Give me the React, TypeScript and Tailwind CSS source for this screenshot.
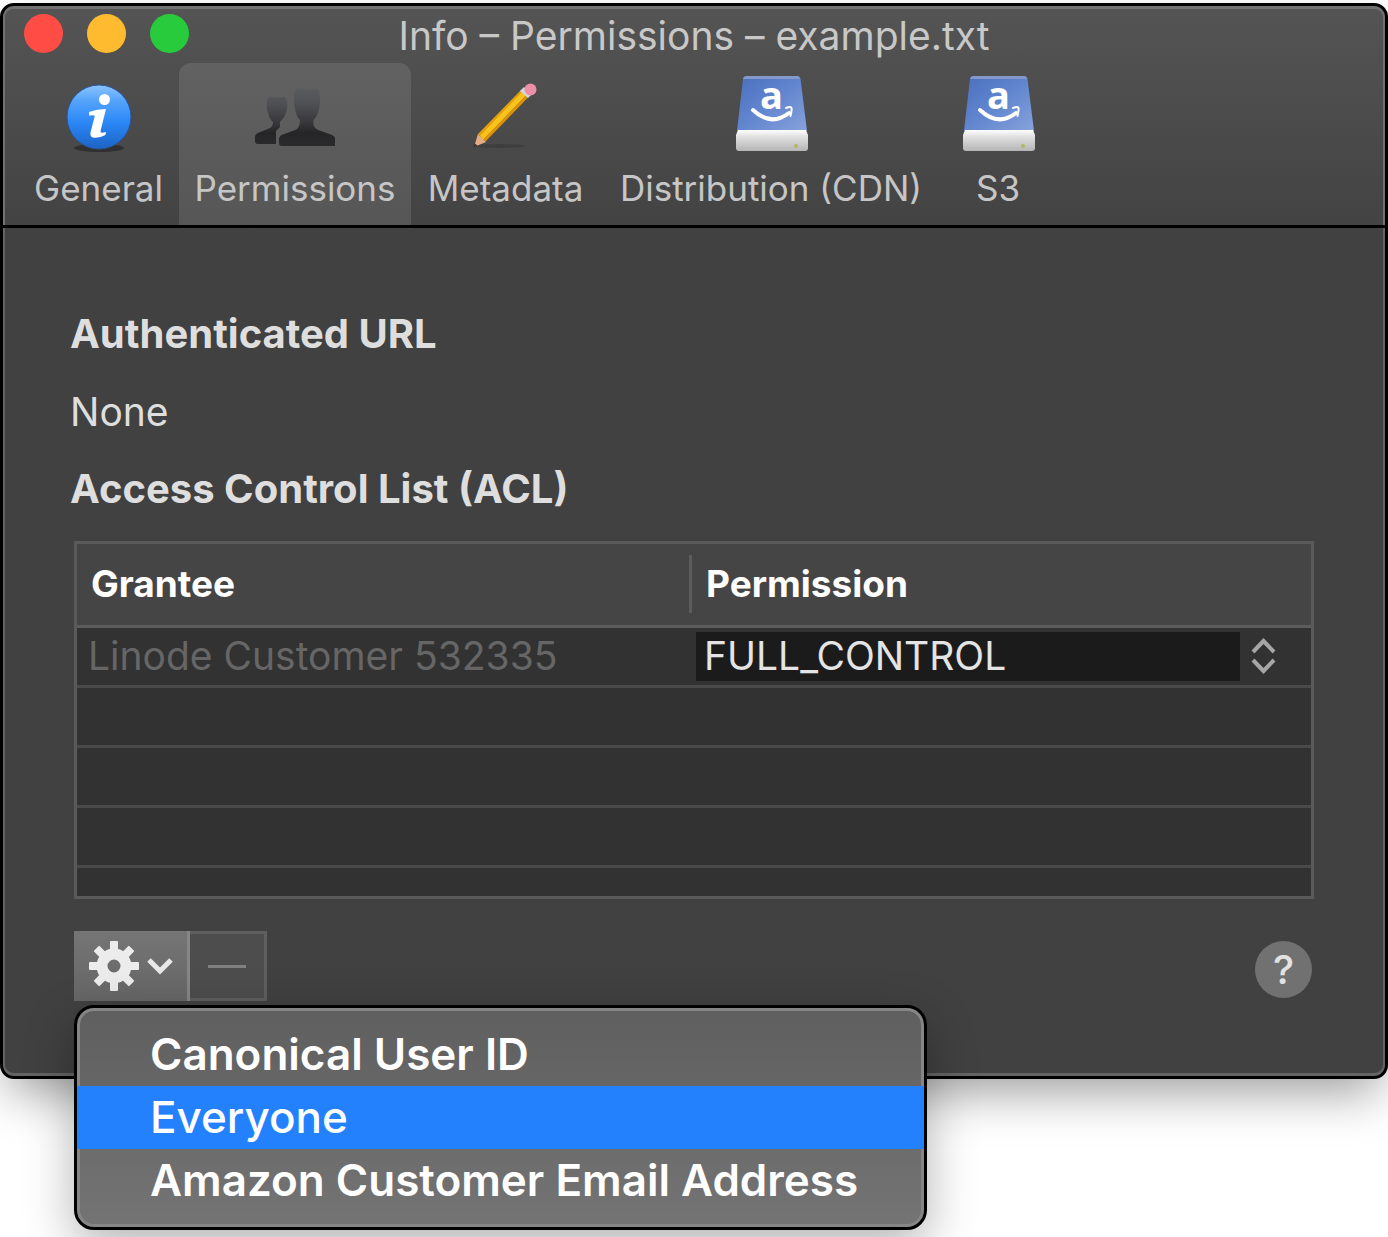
import React from "react";

type TabProps = {
  label: string;
  width: string;
  selected?: boolean;
  children: React.ReactNode;
};

function Tab({ label, width, selected, children }: TabProps) {
  return (
    <button
      role="tab"
      aria-selected={!!selected}
      className={`flex shrink-0 flex-col items-center gap-[14px] pt-[11px] pb-[17px] ${width} ${
        selected ? "rounded-t-xl bg-white/10" : ""
      }`}
    >
      {children}
      <span className="text-[35px] leading-10 whitespace-nowrap text-[#c6c6c6]">{label}</span>
    </button>
  );
}

function InfoIcon() {
  return (
    <svg viewBox="0 0 80 80" className="h-20 w-20" aria-hidden="true">
      <defs>
        <linearGradient id="info" x1="0" y1="0" x2="0" y2="1">
          <stop offset="0" stopColor="#8cc4ff" />
          <stop offset="0.25" stopColor="#54a3fb" />
          <stop offset="0.6" stopColor="#2a86f5" />
          <stop offset="1" stopColor="#1c63c4" />
        </linearGradient>
      </defs>
      <ellipse cx="40" cy="74" rx="25" ry="4" fill="#262626" opacity="0.7" />
      <circle cx="40" cy="43" r="32" fill="url(#info)" stroke="#28549a" strokeWidth="1" />
      <circle cx="45.500" cy="25.500" r="5.500" fill="#fff" />
      <path d="M30 38q8-3 17-3l-5.500 22q-.5 3 5.500 1l-.6 3q-5 2.800-10 2.800-6.500 0-4.700-6.300l4-15q.5-2-5.700-1z" fill="#fff" />
    </svg>
  );
}

function PeopleIcon() {
  return (
    <svg viewBox="0 0 80 80" className="h-20 w-20" aria-hidden="true">
      <defs>
        <linearGradient id="people" x1="0" y1="14" x2="0" y2="70" gradientUnits="userSpaceOnUse">
          <stop offset="0" stopColor="#5b5c60" />
          <stop offset="0.3" stopColor="#4e4f53" />
          <stop offset="0.6" stopColor="#39393c" />
          <stop offset="0.8" stopColor="#252426" />
          <stop offset="1" stopColor="#2a292b" />
        </linearGradient>
      </defs>
      <path
        d="M12 28q0-4 3-5.500 7 2.500 14 0 3 2 3 6 1 2 0 6-1 8-7 13.500v5l-4 4v13H3q-3 0-3-3v-4q0-3 4-4.500l11-4.500q3-2 3-6-4-3-5-10-2-2-1-10z"
        fill="url(#people)"
      />
      <path
        d="M40 17q2-3 6-3 8 3 15 0 4 2 3.500 8 1 3 .5 7-1 12-6.500 17v5q1 4 7.500 6l11 4q4 2 4 6v3q0 2-3 2H27q-3 0-3-3v-4q0-3 4-4.500l12-4.500q5-2 5-10-4-3-5.500-14-1-6-.5-9 0-3 1-6z"
        fill="url(#people)"
      />
    </svg>
  );
}

function PencilIcon() {
  return (
    <svg viewBox="0 0 80 80" className="h-20 w-20" aria-hidden="true">
      <ellipse cx="34" cy="72" rx="26" ry="2" fill="#3c3c3c" opacity="0.8" />
      <path d="M12 60 20 68 8 73z" fill="#e3ac85" />
      <path d="M8.500 69.500 11.500 71.500 7.500 73.500z" fill="#3a2c24" />
      <path d="M12 60 55 16l3 2.500L15 63z" fill="#e0a010" />
      <path d="M14 62 57 17l4 3.500L17.500 66z" fill="#fac31c" />
      <path d="m17 65.500 44-45 2 2-43.500 45z" fill="#d9930c" />
      <path d="m54 17 4-4 8 7-4 4z" fill="#d5d5dc" />
      <circle cx="64.500" cy="15.500" r="6" fill="#ee8fa9" />
    </svg>
  );
}

function DriveIcon({ id }: { id: string }) {
  return (
    <svg viewBox="-2 0 80 80" className="h-20 w-20 overflow-visible" aria-hidden="true">
      <defs>
        <linearGradient id={`${id}-top`} x1="0" y1="0" x2="1" y2="1">
          <stop offset="0" stopColor="#4a6fbd" />
          <stop offset="0.5" stopColor="#6286cf" />
          <stop offset="1" stopColor="#88a2dc" />
        </linearGradient>
        <linearGradient id={`${id}-front`} x1="0" y1="0" x2="0" y2="1">
          <stop offset="0" stopColor="#ffffff" />
          <stop offset="0.35" stopColor="#dedede" />
          <stop offset="1" stopColor="#b5b5b5" />
        </linearGradient>
      </defs>
      <path d="M14 2h50q3 0 3.500 3L74 57H4L10 5q.5-3 4-3z" fill={`url(#${id}-top)`} />
      <path d="M14 2h50q2.500 0 3 3H10q.5-3 4-3z" fill="#8398cc" />
      <path d="M5 56h68l2 5v13q0 3-3 3H6q-3 0-3-3V61z" fill={`url(#${id}-front)`} />
      <circle cx="63" cy="72" r="2" fill="#b3b56a" />
      <text x="38.500" y="35" textAnchor="middle" fontSize="38" fontWeight="700" fill="#fff" className="font-['Open_Sans',sans-serif]">
        a
      </text>
      <path d="M20 36q18 17 36 3" fill="none" stroke="#fff" strokeWidth="4" strokeLinecap="round" />
      <path d="M53 34q5-2 5.500 0t-1 8" fill="none" stroke="#fff" strokeWidth="2" strokeLinecap="round" />
    </svg>
  );
}

function GearIcon() {
  const angles = [0, 45, 90, 135, 180, 225, 270, 315];
  return (
    <svg viewBox="0 0 50 50" className="h-[50px] w-[50px]" aria-hidden="true">
      <g fill="#ececec">
        {angles.map((a) => (
          <path key={a} d="M21 12V1q0-1 1-1h6q1 0 1 1v11z" transform={`rotate(${a} 25 25)`} />
        ))}
      </g>
      <circle cx="25" cy="25" r="12" fill="none" stroke="#ececec" strokeWidth="11" />
    </svg>
  );
}

const lights = [
  { name: "Close", color: "bg-[#ff4d45]" },
  { name: "Minimize", color: "bg-[#ffbb2f]" },
  { name: "Zoom", color: "bg-[#27cb3b]" },
];

export default function App() {
  return (
    <div className="min-h-screen bg-white pt-[3px] font-['Inter',sans-serif]">
      <main className="rounded-[14px] border-[3px] border-black bg-black shadow-[0_20px_50px_-8px_rgba(0,0,0,0.4)]">
        <header className="rounded-t-[11px] border-x-2 border-t-[3px] border-[#717171] bg-linear-to-b from-[#545454] to-[#434343]">
          <div className="grid h-[54px] grid-cols-[1fr_auto_1fr] items-center">
            <div className="flex gap-6 self-start pt-[5px] pl-[19px]">
              {lights.map((l) => (
                <button key={l.name} aria-label={l.name} className={`h-[39px] w-[39px] rounded-full ${l.color}`} />
              ))}
            </div>
            <h1 className="text-[39px] leading-12 whitespace-nowrap text-[#c8c8c8]">
              Info – Permissions – example.txt
            </h1>
          </div>
          <nav role="tablist" aria-label="Info sections" className="flex pl-[13px]">
            <Tab label="General" width="w-[161px]">
              <InfoIcon />
            </Tab>
            <Tab label="Permissions" width="w-[232px]" selected>
              <PeopleIcon />
            </Tab>
            <Tab label="Metadata" width="w-[189px]">
              <PencilIcon />
            </Tab>
            <Tab label="Distribution (CDN)" width="w-[342px]">
              <DriveIcon id="cdn" />
            </Tab>
            <Tab label="S3" width="w-[112px]">
              <DriveIcon id="s3" />
            </Tab>
          </nav>
        </header>

        <section className="mt-[3px] rounded-b-[11px] border-x-2 border-b-[3px] border-[#646464] bg-[#414141] px-[65px] pt-[82px] pb-[72px] text-[39px] leading-12 text-[#dedede]">
          <h2 className="text-[40px] leading-12 font-bold">Authenticated URL</h2>
          <p className="mt-[30px]">None</p>
          <h2 className="mt-[29px] text-[40px] leading-12 font-bold">Access Control List (ACL)</h2>

          <div className="mx-1 mt-[28px] border-[3px] border-[#5a5a5a] bg-[#323232]">
            <table className="w-full table-fixed border-collapse">
              <thead>
                <tr className="h-[82px] border-b-[3px] border-[#5c5c5c] bg-[#454545] text-left text-[37px] text-white">
                  <th className="w-1/2 p-0 font-bold">
                    <div className="mr-0.5 flex h-[58px] items-center border-r-[3px] border-[#5c5c5c] pl-[14px]">Grantee</div>
                  </th>
                  <th className="p-0 pl-3 font-bold">Permission</th>
                </tr>
              </thead>
              <tbody>
                <tr className="h-[60px] border-b-[3px] border-[#4a4a4a]">
                  <td className="p-0 pl-[11px] text-[#666]">Linode Customer 532335</td>
                  <td className="p-0 pl-0.5">
                    <div className="flex items-center gap-[11px] pr-[35px]">
                      <select
                        aria-label="Permission"
                        className="h-[49px] min-w-0 flex-1 appearance-none bg-[#1b1b1b] pl-2 leading-12 text-[#e4e4e4]"
                      >
                        <option>FULL_CONTROL</option>
                      </select>
                      <svg viewBox="0 0 25 36" className="h-9 w-[25px]" fill="none" stroke="#a6a6a6" strokeWidth="4" aria-hidden="true">
                        <path d="M2 14 12.500 3 23 14M2 22 12.500 33 23 22" />
                      </svg>
                    </div>
                  </td>
                </tr>
                {[0, 1, 2].map((i) => (
                  <tr key={i} className="h-[60px] border-b-[3px] border-[#4a4a4a]">
                    <td />
                    <td />
                  </tr>
                ))}
                <tr className="h-[30px]">
                  <td />
                  <td />
                </tr>
              </tbody>
            </table>
          </div>

          <div className="mx-1 mt-8 flex items-end justify-between">
            <div className="relative flex">
              <button
                aria-label="Add grantee"
                aria-expanded="true"
                className="flex h-[70px] w-[116px] items-center justify-center gap-2 border-r-[3px] border-[#868686] bg-linear-to-b from-[#757575] to-[#666666]"
              >
                <GearIcon />
                <svg viewBox="0 0 26 18" className="h-[18px] w-[26px]" fill="none" stroke="#e8e8e8" strokeWidth="5" aria-hidden="true">
                  <path d="M2 3 13 14 24 3" />
                </svg>
              </button>
              <button
                aria-label="Remove grantee"
                disabled
                className="flex h-[70px] w-[77px] items-center justify-center border-y-[3px] border-r-[3px] border-[#5f5f5f] bg-[#4d4d4d]"
              >
                <span className="h-[3px] w-[38px] bg-[#808080]" />
              </button>

              <div className="absolute top-full left-0 z-10 mt-1 rounded-[20px] border-[3px] border-black bg-black shadow-[0_16px_50px_rgba(0,0,0,0.3)]">
                <ul
                  role="menu"
                  className="rounded-[17px] border-[3px] border-[#868686] bg-linear-to-b from-[#5f5f5f] to-[#747474] pt-3 pb-3 text-[44px] leading-[63px] font-semibold whitespace-nowrap text-white"
                >
                  <li role="none" className="-mx-[3px]">
                    <button role="menuitem" className="block w-full pr-[66px] pl-[73px] text-left">
                      Canonical User ID
                    </button>
                  </li>
                  <li role="none" className="-mx-[3px]">
                    <button role="menuitem" className="block w-full bg-[#2481fd] pr-[66px] pl-[73px] text-left font-medium">
                      Everyone
                    </button>
                  </li>
                  <li role="none" className="-mx-[3px]">
                    <button role="menuitem" className="block w-full pr-[66px] pl-[73px] text-left">
                      Amazon Customer Email Address
                    </button>
                  </li>
                </ul>
              </div>
            </div>
            <button
              aria-label="Help"
              className="mr-[2px] mb-[3px] flex h-[57px] w-[57px] items-center justify-center rounded-full bg-[#717171] text-[40px] font-medium text-[#e2e2e2]"
            >
              ?
            </button>
          </div>
        </section>
      </main>
    </div>
  );
}
